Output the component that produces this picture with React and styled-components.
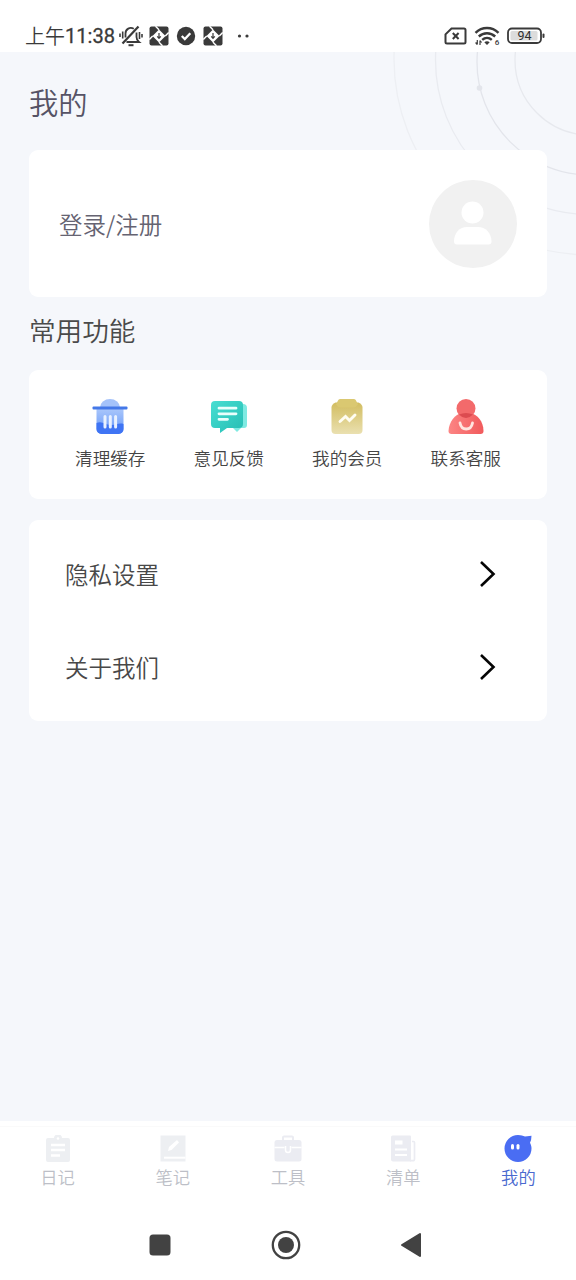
import React from "react";
import styled, { createGlobalStyle } from "styled-components";

const GlobalStyle = createGlobalStyle`
    * {
        box-sizing: border-box;
    }

    body {
        margin: 0;
        background: #fff;
        font-family: Roboto, "Noto Sans CJK SC", sans-serif;
    }

    svg {
        display: block;
        flex: none;
    }
`;

const Screen = styled.div`
    display: flex;
    flex-direction: column;
    width: 576px;
    height: 1280px;
    overflow: hidden;
    background: #fff;
`;

const StatusBar = styled.header`
    display: flex;
    justify-content: space-between;
    flex: none;
    height: 52px;
    padding: 19px 31px 0 25px;
    color: #3a3a3a;
`;

const StatusGroup = styled.div`
    display: flex;
    align-items: center;
    gap: ${({ $gap }) => $gap}px;
    height: 33px;
`;

const Clock = styled.span`
    display: flex;
    align-items: center;
    width: 90px;
    margin-right: -3px;
    padding-top: 2px;
    font-size: 20.1px;
    font-weight: 400;
    line-height: 33px;
    white-space: nowrap;
    -webkit-text-stroke: 0.3px #3a3a3a;
`;

const DayPart = styled.span`
    font-family: "Noto Sans CJK SC", sans-serif;
    font-size: 20px;
    font-weight: 350;
    line-height: 31px;
    padding-bottom: 2px;
    -webkit-text-stroke: 0;
`;

const Content = styled.main`
    position: relative;
    flex: none;
    height: 1069px;
    padding: 0 29px;
    background: #f5f7fb;
    overflow: hidden;
`;

// decorative rings lie under the heading and the cards
const Rings = styled.svg`
    position: absolute;
    top: 0;
    right: 0;
`;

const PageTitle = styled.h1`
    height: 98px;
    margin: 0;
    padding-top: 27px;
    font-family: "Noto Sans CJK SC", sans-serif;
    font-size: 29.3px;
    font-weight: 350;
    line-height: 44px;
    color: #565365;
`;

const SectionTitle = styled.h2`
    height: 73px;
    margin: 0;
    padding-top: 13px;
    font-family: "Noto Sans CJK SC", sans-serif;
    font-size: 26.6px;
    font-weight: 350;
    line-height: 40px;
    color: #4a4a4a;
`;

const Card = styled.section`
    position: relative;
    border-radius: 9px;
    background: #fff;
`;

const LoginCard = styled(Card)`
    display: flex;
    align-items: center;
    justify-content: space-between;
    height: 147px;
    padding: 0 30px;
`;

const LoginText = styled.span`
    font-family: "Noto Sans CJK SC", sans-serif;
    font-size: 23.5px;
    font-weight: 350;
    color: #656371;
`;

const FeatureCard = styled(Card)`
    display: grid;
    grid-template-columns: repeat(4, 1fr);
    height: 129px;
    margin-bottom: 21px;
    padding: 27px 22px 0;
`;

const Feature = styled.div`
    display: flex;
    flex-direction: column;
    align-items: center;
    gap: 11px;
`;

const FeatureLabel = styled.span`
    font-family: "Noto Sans CJK SC", sans-serif;
    font-size: 17.6px;
    font-weight: 350;
    line-height: 24px;
    color: #454545;
`;

const MenuCard = styled(Card)`
    height: 201px;
    padding: 7px 51px 0 36px;
`;

const MenuRow = styled.div`
    display: flex;
    align-items: center;
    justify-content: space-between;
    height: 93px;
    font-family: "Noto Sans CJK SC", sans-serif;
    font-size: 23.5px;
    font-weight: 350;
    color: #484848;
`;

const TabBar = styled.nav`
    display: grid;
    grid-template-columns: repeat(5, 1fr);
    flex: none;
    height: 84px;
    margin-top: 5px;
    padding-top: 8px;
    border-top: 1px solid #fafafa;
`;

const Tab = styled.div`
    display: flex;
    flex-direction: column;
    align-items: center;
    gap: 3px;
    font-family: "Noto Sans CJK SC", sans-serif;
    font-size: 17.3px;
    font-weight: 350;
    line-height: 24px;
    color: ${({ $active }) => ($active ? "#4a69cf" : "#bdbfc7")};
`;

const SystemNav = styled.footer`
    display: grid;
    grid-template-columns: repeat(3, 125.5px);
    justify-items: center;
    align-items: center;
    height: 70px;
    padding-left: 97.5px;
`;

const MutedBell = () => (
    <svg width="24" height="22" viewBox="0 0 24 22" fill="none" stroke="#3a3a3a" strokeWidth="1.8">
        <path d="M7.500 17H20c-2-1.500-2.500-2.500-2.500-5V7.500M14.800 3.800C11 1.500 6.500 4 6.500 8.500v4" />
        <path d="M19.500 1.500L3.500 18.500" strokeWidth="2.200" />
        <path d="M9.500 20.200h5" strokeWidth="2" />
        <path d="M3.700 6.500v7M20.500 7v7M1 8.500v3.500M23 9v3.500" strokeWidth="1.600" />
    </svg>
);

const PinwheelBadge = () => (
    <svg width="20" height="20" viewBox="0 0 20 20">
        <rect x=".5" y=".5" width="19" height="19" rx="2" fill="#3a3a3a" />
        <path d="M10 3.500l6.500 6.500-6.500 6.500L3.500 10z" fill="#fff" />
        <path d="M10 3.700L6.500.3M16.300 10l3.400-3.500M10 16.300l3.500 3.400M3.700 10L.3 13.500" stroke="#fff" strokeWidth="1.500" />
        <path d="M10 7v5M8.200 10.400l1.800 2 1.800-2" fill="none" stroke="#3a3a3a" strokeWidth="1.200" />
    </svg>
);

const CheckBadge = () => (
    <svg width="20" height="20" viewBox="0 0 20 20">
        <circle cx="10" cy="10" r="9.200" fill="#3a3a3a" />
        <path d="M5.800 10l3 3 5.500-5.700" fill="none" stroke="#fff" strokeWidth="2.300" />
    </svg>
);

const MoreDots = () => (
    <svg width="14" height="6" viewBox="0 0 14 6" fill="#3a3a3a">
        <circle cx="3.500" cy="3" r="1.600" />
        <circle cx="11" cy="3" r="1.600" />
    </svg>
);

const NoSim = () => (
    <svg width="23" height="18" viewBox="0 0 23 18" fill="none" stroke="#3a3a3a" strokeWidth="2">
        <path d="M7.500 1.500H20a1.500 1.500 0 0 1 1.500 1.500v12a1.500 1.500 0 0 1-1.500 1.500H3A1.500 1.500 0 0 1 1.500 15V7.300z" />
        <path d="M8.800 6l5.800 6M14.600 6l-5.800 6" />
    </svg>
);

const Wifi = () => (
    <svg width="26" height="20" viewBox="0 0 26 20" fill="none" stroke="#3a3a3a">
        <path d="M1.500 6.800c6.500-6.400 16.500-6.400 23 0M4.800 10.500c4.700-4.400 11.700-4.400 16.400 0M8.200 13.800c2.800-2.500 6.800-2.500 9.600 0" strokeWidth="2.400" />
        <path d="M10.300 16.200q2.700-1.800 5.400 0L13 19z" fill="#3a3a3a" stroke="none" />
        <path d="M3.300 14v4.500M1.600 16.500l1.700 2M6 19v-4.500M6 14.500l1.600 2" strokeWidth="1.200" />
        <text x="20.800" y="19" fontSize="8" fontWeight="500" fill="#3a3a3a" stroke="none">6</text>
    </svg>
);

const Battery = () => (
    <svg width="38" height="18" viewBox="0 0 38 18">
        <rect x="1" y="1.500" width="33" height="14.500" rx="4" fill="#fff" stroke="#3a3a3a" strokeWidth="1.800" />
        <rect x="3.500" y="4" width="27" height="9.500" rx="1.500" fill="#dcdcdc" />
        <rect x="35.500" y="6.500" width="2" height="4.500" rx="1" fill="#3a3a3a" />
        <text x="17.500" y="13.300" fontSize="12.500" fontWeight="400" textAnchor="middle" fill="#2f2f2f">94</text>
    </svg>
);

const BackgroundRings = () => (
    <Rings width="200" height="260" viewBox="376 52 200 260" fill="none" strokeWidth="1.300">
        <circle cx="590" cy="60" r="75" stroke="#e7e9ee" />
        <circle cx="590" cy="62" r="113" stroke="#e3e5eb" />
        <circle cx="590" cy="60" r="154.500" stroke="#e9ebf0" />
        <circle cx="590" cy="59" r="196" stroke="#edeff3" />
        <circle cx="479.500" cy="88" r="2.800" fill="#e3e5eb" />
    </Rings>
);

const Avatar = () => (
    <svg width="88" height="88" viewBox="0 0 88 88">
        <circle cx="44" cy="44" r="44" fill="#f1f1f1" />
        <g fill="#fff">
            <circle cx="43.500" cy="32.500" r="11" />
            <path d="M25 61.500C25 53 30.500 47 38 47h11c7.500 0 13.500 6 13.500 14.500q0 3-3 3h-31.500q-3 0-3-3z" />
        </g>
    </svg>
);

const TrashIcon = () => (
    <svg width="38" height="38" viewBox="0 0 38 38">
        <defs>
            <linearGradient id="trashBody" x1="0" y1="0" x2="0" y2="1">
                <stop offset="0" stopColor="#a9c6fb" />
                <stop offset="1" stopColor="#6496f8" />
            </linearGradient>
        </defs>
        <path d="M9 10.500a10 8.500 0 0 1 20 0z" fill="#a4c2fa" />
        <path d="M5.500 12h27v20a5 5 0 0 1-5 5h-17a5 5 0 0 1-5-5z" fill="url(#trashBody)" />
        <path d="M5.500 26c5-2.500 9 1.500 14 2 5 .5 8-2.500 13-1v5a5 5 0 0 1-5 5h-17a5 5 0 0 1-5-5z" fill="#3f74f4" />
        <rect x="1.500" y="9.500" width="35" height="3" rx="1" fill="#4478e8" />
        <path d="M14 19.500v10.500M19.300 19.500v10.500M24.600 19.500v10.500" stroke="#e9f1ff" strokeWidth="3" strokeLinecap="round" />
    </svg>
);

const FeedbackIcon = () => (
    <svg width="38" height="38" viewBox="0 0 38 38">
        <defs>
            <linearGradient id="bubble" x1="0" y1="0" x2="1" y2="1">
                <stop offset="0" stopColor="#48ded2" />
                <stop offset="1" stopColor="#25bdb3" />
            </linearGradient>
        </defs>
        <path d="M10 7h23q4 0 4 4v17q0 3-3 3h-3l-4 4-4-4H10z" fill="#7feae2" />
        <path d="M5 4h24q4 0 4 4V27q0 4-4 4H17l-7 5V31H5q-4 0-4-4V8q0-4 4-4z" fill="url(#bubble)" />
        <path d="M9 11.200h17M9 16.800h17M9 22.300h8.500" stroke="#e9fffc" strokeWidth="2.800" strokeLinecap="round" />
    </svg>
);

const MemberIcon = () => (
    <svg width="38" height="38" viewBox="0 0 38 38">
        <defs>
            <linearGradient id="clip" x1="0" y1="0" x2="0" y2="1">
                <stop offset="0" stopColor="#d2bd60" />
                <stop offset="1" stopColor="#eae0b0" />
            </linearGradient>
        </defs>
        <path d="M7.500 5.500h23q4 2 4 5V33a4 4 0 0 1-4 4h-23a4 4 0 0 1-4-4V10.500q0-3 4-5z" fill="url(#clip)" />
        <path d="M12 2h14q1.500 0 2 1.500l2 4q-2 3-4.500 3h-13q-2.500 0-4.500-3l2-4q.5-1.500 2-1.500z" fill="#dac871" />
        <path d="M12 24.500l5.500-5 4 4 5.500-5.500" fill="none" stroke="#fffdf2" strokeWidth="2.900" strokeLinecap="round" />
    </svg>
);

const SupportIcon = () => (
    <svg width="38" height="38" viewBox="0 0 38 38">
        <defs>
            <linearGradient id="person" x1="0" y1="0" x2="1" y2="0">
                <stop offset="0" stopColor="#fc8584" />
                <stop offset="1" stopColor="#f15a5c" />
            </linearGradient>
        </defs>
        <path d="M1.500 34C2 24.500 8 17.500 15 16h8c7.500 1.500 13.500 8.500 13.500 18q0 3-3 3h-29q-3 0-3-3z" fill="url(#person)" />
        <circle cx="19" cy="11.500" r="9.500" fill="#f36a6b" />
        <path d="M12 17.500q7-3 14 0-3.500 3.500-7 3.500t-7-3.500z" fill="#dc4b50" />
        <path d="M13 26c1.500 8 11 8 12.500 0" fill="none" stroke="#ffe5e0" strokeWidth="2.800" strokeLinecap="round" />
    </svg>
);

const Chevron = () => (
    <svg width="16" height="28" viewBox="0 0 16 28" fill="none" stroke="#050505" strokeWidth="2.600">
        <path d="M1 2l12.500 12L1 26" />
    </svg>
);

const DiaryIcon = () => (
    <svg width="26" height="27" viewBox="0 0 26 27">
        <path d="M3 3h6a4 3.500 0 0 1 8 0h6q2 0 2 2v20q0 2-2 2H3q-2 0-2-2V5q0-2 2-2z" fill="#edeff2" />
        <path d="M6 10h14M6 15h14M6 20.500h9" stroke="#fff" strokeWidth="2.500" />
        <circle cx="13" cy="3.500" r="1.300" fill="#fff" />
    </svg>
);

const NoteIcon = () => (
    <svg width="26" height="27" viewBox="0 0 26 27">
        <path d="M.5.5h25v26H.5z" fill="#edeff2" />
        <path d="M4 22.700h21.500" stroke="#fff" strokeWidth="2" />
        <path d="M8 16l1-4 8-7 2 2.500-7.500 7.500z" fill="#fff" />
    </svg>
);

const ToolIcon = () => (
    <svg width="28" height="27" viewBox="0 0 28 27">
        <path d="M9 5V2.500q0-1 1-1h8q1 0 1 1V5" fill="none" stroke="#ebecf2" strokeWidth="2" />
        <path d="M3 5h22q2.500 0 2.500 2.500V24q0 2.500-2.500 2.500H3Q.5 26.500.5 24V7.500Q.5 5 3 5z" fill="#ebecf2" />
        <path d="M.5 12.500h10M17.500 12.500h10" stroke="#fff" strokeWidth="1.600" />
        <path d="M11.500 11v4a2.500 2.500 0 0 0 5 0v-4" fill="#ebecf2" stroke="#fff" strokeWidth="1.500" />
    </svg>
);

const ListIcon = () => (
    <svg width="26" height="27" viewBox="0 0 26 27">
        <path d="M2.500.5H20q1 0 1 1v25H3q-2 0-2-2V2q0-1.500 1.500-1.500z" fill="#ebecf2" />
        <path d="M22 6.500h1.500q1 0 1 1V24q0 1.700-1.700 1.700H20" fill="none" stroke="#ebecf2" strokeWidth="1.700" />
        <path d="M5 5.500h7.500v4H5zM5 13.500h12v2H5zM5 19h12v2H5z" fill="#fff" />
    </svg>
);

const MineIcon = () => (
    <svg width="28" height="27" viewBox="0 0 28 27">
        <path d="M14 0c3 0 5 .8 7 1.500L27.500.8q0 4-1.500 7C27 10 27.500 11.500 27.500 13.500A13.500 13.500 0 1 1 14 0z" fill="#4a6df3" />
        <rect x="7" y="9" width="3" height="5.500" rx="1.500" fill="#fff" />
        <rect x="12.500" y="9" width="3" height="5.500" rx="1.500" fill="#fff" />
    </svg>
);

const RecentsButton = () => (
    <svg width="22" height="22" viewBox="0 0 22 22">
        <rect x=".5" y=".5" width="21" height="21" rx="3.500" fill="#424242" />
    </svg>
);

const HomeButton = () => (
    <svg width="30" height="30" viewBox="0 0 30 30">
        <circle cx="15" cy="15" r="13.200" fill="none" stroke="#424242" strokeWidth="2.300" />
        <circle cx="15" cy="15" r="8" fill="#424242" />
    </svg>
);

const BackButton = () => (
    <svg width="22" height="26" viewBox="0 0 22 26">
        <path d="M2 13L20 2v22z" fill="#424242" stroke="#424242" strokeWidth="2" strokeLinejoin="round" />
    </svg>
);

const features = [
    { label: "清理缓存", icon: <TrashIcon /> },
    { label: "意见反馈", icon: <FeedbackIcon /> },
    { label: "我的会员", icon: <MemberIcon /> },
    { label: "联系客服", icon: <SupportIcon /> },
];

const menu = ["隐私设置", "关于我们"];

const tabs = [
    { label: "日记", icon: <DiaryIcon /> },
    { label: "笔记", icon: <NoteIcon /> },
    { label: "工具", icon: <ToolIcon /> },
    { label: "清单", icon: <ListIcon /> },
    { label: "我的", icon: <MineIcon />, active: true },
];

const App = () => (
    <Screen>
        <GlobalStyle />
        <StatusBar>
            <StatusGroup $gap={6.7}>
                <Clock>
                    <DayPart>上午</DayPart>11:38
                </Clock>
                <MutedBell />
                <PinwheelBadge />
                <CheckBadge />
                <PinwheelBadge />
                <span />
                <MoreDots />
            </StatusGroup>
            <StatusGroup $gap={7}>
                <NoSim />
                <Wifi />
                <Battery />
            </StatusGroup>
        </StatusBar>
        <Content>
            <BackgroundRings />
            <PageTitle>我的</PageTitle>
            <LoginCard>
                <LoginText>登录/注册</LoginText>
                <Avatar />
            </LoginCard>
            <SectionTitle>常用功能</SectionTitle>
            <FeatureCard>
                {features.map(({ label, icon }) => (
                    <Feature key={label}>
                        {icon}
                        <FeatureLabel>{label}</FeatureLabel>
                    </Feature>
                ))}
            </FeatureCard>
            <MenuCard>
                {menu.map((label) => (
                    <MenuRow key={label}>
                        {label}
                        <Chevron />
                    </MenuRow>
                ))}
            </MenuCard>
        </Content>
        <TabBar>
            {tabs.map(({ label, icon, active }) => (
                <Tab key={label} $active={active}>
                    {icon}
                    {label}
                </Tab>
            ))}
        </TabBar>
        <SystemNav>
            <RecentsButton />
            <HomeButton />
            <BackButton />
        </SystemNav>
    </Screen>
);

export default App;
